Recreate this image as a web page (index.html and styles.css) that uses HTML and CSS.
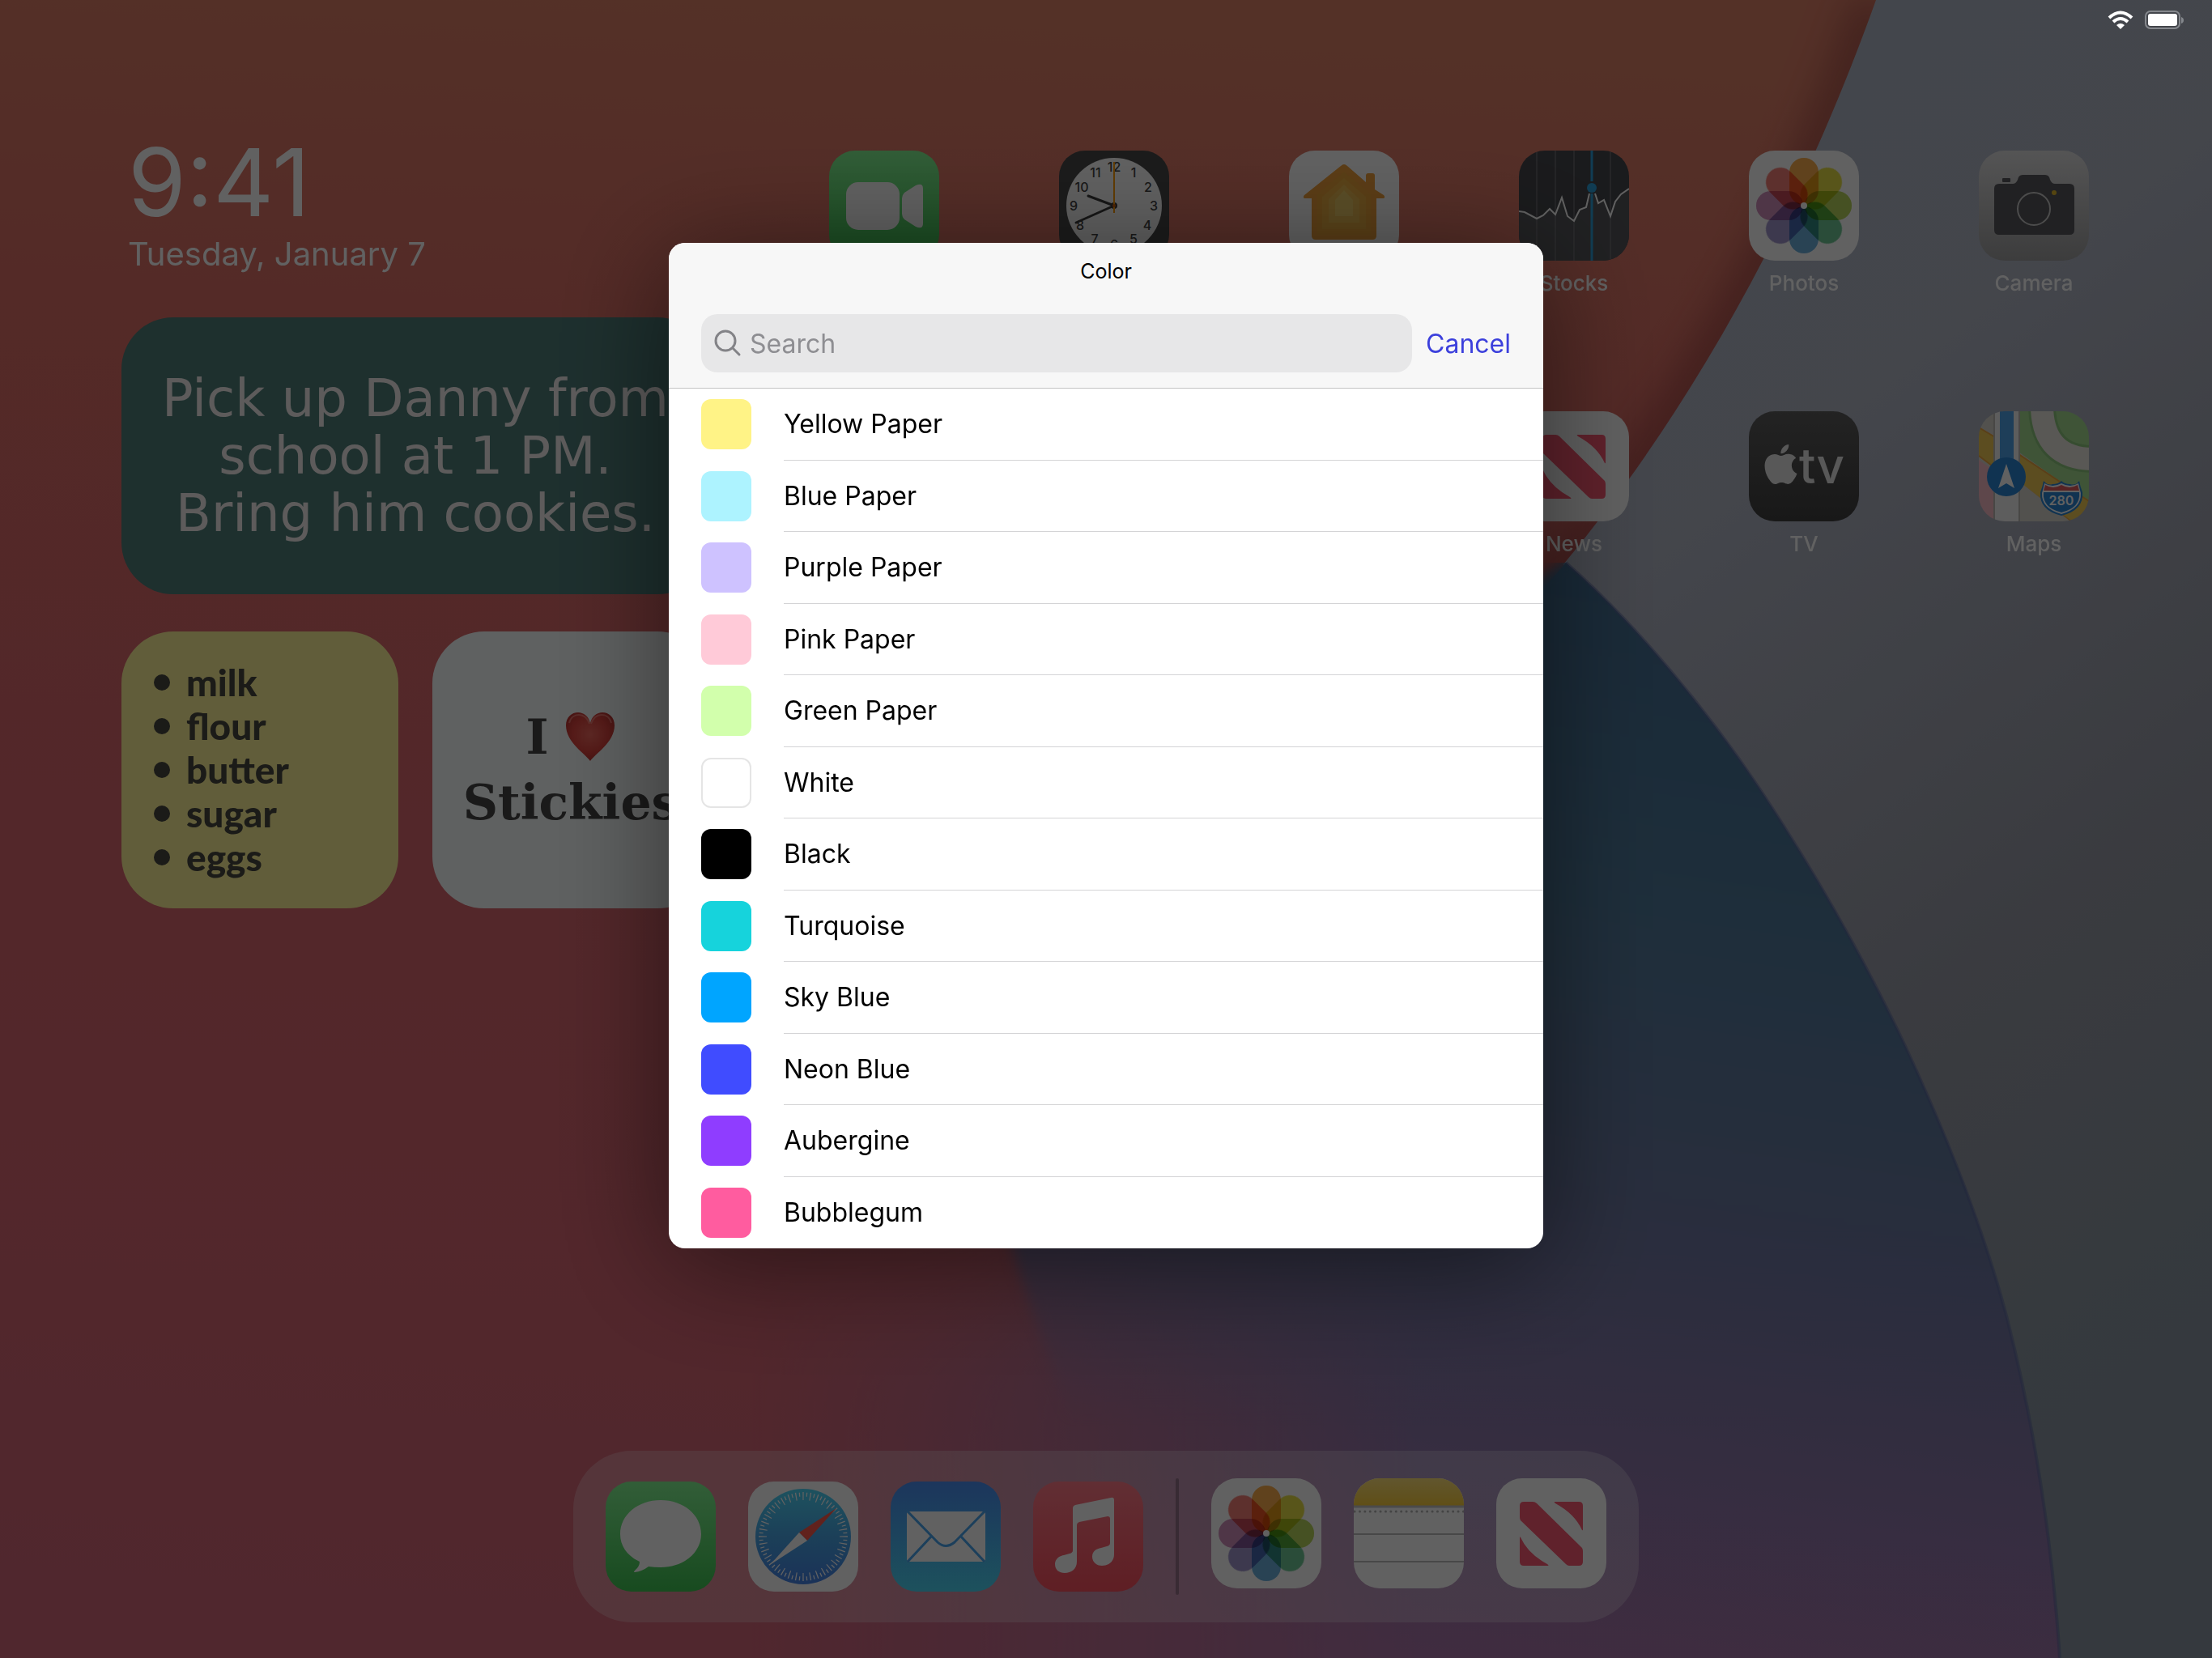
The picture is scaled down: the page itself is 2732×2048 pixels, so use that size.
FILE: index.html
```html
<!DOCTYPE html>
<html lang="en">
<head>
  <meta charset="UTF-8">
  <meta name="viewport" content="width=device-width, initial-scale=1.0">
  <title>Color</title>
  <link rel="stylesheet" href="styles.css">
</head>
<body>
  <!-- wallpaper -->
  <svg class="wallpaper" viewBox="0 0 2732 2048" preserveAspectRatio="none" aria-hidden="true">
    <defs>
      <linearGradient id="wpRed" x1="0.3" y1="0" x2="0.2" y2="1">
        <stop offset="0" stop-color="#de8068"/>
        <stop offset="0.2" stop-color="#dc6f66"/>
        <stop offset="0.45" stop-color="#db686d"/>
        <stop offset="0.75" stop-color="#d96673"/>
        <stop offset="1" stop-color="#d2667a"/>
      </linearGradient>
      <linearGradient id="wpGrey" x1="0" y1="0" x2="0.3" y2="1">
        <stop offset="0" stop-color="#b0bac9"/>
        <stop offset="0.35" stop-color="#b2b7c6"/>
        <stop offset="0.7" stop-color="#999ca8"/>
        <stop offset="1" stop-color="#8b97a2"/>
      </linearGradient>
      <linearGradient id="wpBlue" gradientUnits="userSpaceOnUse" x1="1900" y1="690" x2="1700" y2="2048">
        <stop offset="0" stop-color="#426d92"/>
        <stop offset="0.3" stop-color="#507a9b"/>
        <stop offset="0.6" stop-color="#7078a2"/>
        <stop offset="0.82" stop-color="#9076aa"/>
        <stop offset="1" stop-color="#aa75a8"/>
      </linearGradient>
      <linearGradient id="wpFade" x1="0" y1="0" x2="0" y2="1">
        <stop offset="0.74" stop-color="#fff"/>
        <stop offset="0.86" stop-color="#000"/>
      </linearGradient>
      <linearGradient id="wpSide" x1="0" y1="0" x2="1" y2="0">
        <stop offset="0.34" stop-color="#000"/>
        <stop offset="0.47" stop-color="#777"/>
        <stop offset="0.64" stop-color="#fff"/>
      </linearGradient>
      <filter id="soft" x="-20%" y="-20%" width="140%" height="140%"><feGaussianBlur stdDeviation="24"/></filter>
      <filter id="slightSoft"><feGaussianBlur stdDeviation="8"/></filter>
      <filter id="verySoft" x="-30%" y="-30%" width="160%" height="160%"><feGaussianBlur stdDeviation="70"/></filter>
      <mask id="fadeDown"><rect width="2732" height="2048" fill="url(#wpFade)"/></mask>
      <mask id="fadeSide">
        <rect width="2732" height="2048" fill="url(#wpSide)"/>
        <path d="M0 690H1400V1500L1230 1620H0Z" fill="#000" filter="url(#verySoft)"/>
      </mask>
      <clipPath id="hump"><path d="M1934 695C2020 770 2110 880 2173 974C2240 1075 2300 1180 2353 1292C2410 1415 2450 1520 2478 1625C2515 1770 2535 1910 2544 2048H0V695Z"/></clipPath>
    </defs>
    <rect width="2732" height="2048" fill="url(#wpRed)"/>
    <path d="M2317 0C2240 230 2110 500 1850 800" fill="none" stroke="#7a2f33" stroke-width="50" opacity="0.5" filter="url(#soft)"/>
    <path d="M2317 0C2235 230 2110 480 1931 697L2400 2048H2732V0Z" fill="url(#wpGrey)"/>
    <g clip-path="url(#hump)">
      <g mask="url(#fadeSide)">
        <path d="M1934 695C1800 860 1500 1000 1250 1500L0 1400V2048H2732V695Z" fill="url(#wpBlue)"/>
      </g>
      <g mask="url(#fadeDown)">
        <path d="M1935 690C1500 1000 1200 1300 1250 1540C1270 1620 1330 1740 1400 2048H2780V600Z" fill="url(#wpBlue)" filter="url(#slightSoft)"/>
      </g>
    </g>
    <path d="M1934 695C2020 770 2110 880 2173 974C2240 1075 2300 1180 2353 1292C2410 1415 2450 1520 2478 1625C2515 1770 2535 1910 2544 2048" fill="none" stroke="#5a66a0" stroke-width="4" opacity="0.5"/>
  </svg>

  <!-- shared icons -->
  <svg class="defs" aria-hidden="true">
    <defs>
      <linearGradient id="greenFill" x1="0" y1="0" x2="0" y2="1"><stop offset="0" stop-color="#84f593"/><stop offset="1" stop-color="#3fc453"/></linearGradient>
      <linearGradient id="redFill" x1="0" y1="0" x2="0" y2="1"><stop offset="0" stop-color="#ff7a88"/><stop offset="1" stop-color="#f9505f"/></linearGradient>
      <symbol id="photos" viewBox="0 0 136 136">
        <g class="petals">
          <rect x="50" y="9" width="36" height="58" rx="18" fill="#fbae4c"/>
          <rect x="50" y="9" width="36" height="58" rx="18" fill="#e6df45" transform="rotate(45 68 68)"/>
          <rect x="50" y="9" width="36" height="58" rx="18" fill="#b9d45d" transform="rotate(90 68 68)"/>
          <rect x="50" y="9" width="36" height="58" rx="18" fill="#70c795" transform="rotate(135 68 68)"/>
          <rect x="50" y="9" width="36" height="58" rx="18" fill="#6cb0de" transform="rotate(180 68 68)"/>
          <rect x="50" y="9" width="36" height="58" rx="18" fill="#a095cc" transform="rotate(225 68 68)"/>
          <rect x="50" y="9" width="36" height="58" rx="18" fill="#cf8fbb" transform="rotate(270 68 68)"/>
          <rect x="50" y="9" width="36" height="58" rx="18" fill="#f47e76" transform="rotate(315 68 68)"/>
        </g>
        <circle cx="68" cy="68" r="4" fill="#fff"/>
      </symbol>
      <symbol id="news" viewBox="0 0 136 136">
        <g fill="#fb5973">
          <path d="M29 34Q29 29 34 29H45Q48 29 50 31L106 86Q107 88 107 90V103Q107 108 102 108H90Q88 108 86 106L30 52Q29 50 29 48Z"/>
          <path d="M72 29H102Q107 29 107 34V63Q107 65 106 64Q97 44 73 31Q71 29 72 29Z"/>
          <path d="M29 74Q29 71 30 73Q39 93 63 106Q66 108 63 108H34Q29 108 29 103Z"/>
        </g>
      </symbol>
    </defs>
  </svg>

  <div class="screen">
    <main class="home">
      <section class="widgets">
        <div class="clock">
          <time class="clock-time">9:41</time>
          <span class="clock-date">Tuesday, January 7</span>
        </div>
        <div class="widget chalk">Pick up Danny from<br>school at 1 PM.<br>Bring him cookies.</div>
        <div class="widget yellow">
          <ul>
            <li>milk</li>
            <li>flour</li>
            <li>butter</li>
            <li>sugar</li>
            <li>eggs</li>
          </ul>
        </div>
        <div class="widget white">
          <p>I
            <svg class="heart" viewBox="0 0 62 62" role="img" aria-label="love">
              <defs><radialGradient id="heartFill" cx="0.5" cy="0.45" r="0.6"><stop offset="0" stop-color="#f56a5f"/><stop offset="0.6" stop-color="#e04640"/><stop offset="1" stop-color="#b8322f"/></radialGradient></defs>
              <path d="M31 61C25 52 1 38 1 17C1 7 8 1 16 1C23 1 29 6 31 14C33 6 39 1 46 1C54 1 61 7 61 17C61 38 37 52 31 61Z" fill="url(#heartFill)"/>
              <path d="M5 14C7 6 13 4 17 4C22 4 27 7 30 15M32 15C35 7 40 4 45 4C49 4 55 6 57 14" fill="none" stroke="#ff9a90" stroke-width="2" opacity="0.6"/>
            </svg>
          </p>
          <p>Stickies</p>
        </div>
      </section>

      <section class="apps">
        <a class="app" href="#facetime" aria-label="FaceTime">
          <svg class="icon" viewBox="0 0 136 136">
            <rect width="136" height="136" fill="url(#greenFill)"/>
            <rect x="21" y="39" width="66" height="59" rx="15" fill="#fff"/>
            <path d="M90 59Q90 55 93 52L107 43Q116 39 116 47V90Q116 98 107 94L93 85Q90 82 90 78Z" fill="#fff"/>
          </svg>
        </a>
        <a class="app" href="#clock" aria-label="Clock">
          <svg class="icon" viewBox="0 0 136 136">
            <rect width="136" height="136" fill="#494949"/>
            <circle cx="68" cy="68" r="59" fill="#fff"/>
            <g class="digits">
              <text x="68" y="26">12</text><text x="92" y="33">1</text><text x="110" y="51">2</text><text x="117" y="74">3</text>
              <text x="109" y="98">4</text><text x="92" y="115">5</text><text x="68" y="122">6</text><text x="44" y="115">7</text>
              <text x="26" y="98">8</text><text x="18" y="74">9</text><text x="28" y="51">10</text><text x="45" y="33">11</text>
            </g>
            <path d="M68 68L36 56M68 68L21 89" stroke="#3c3c3c" stroke-width="3" stroke-linecap="round"/>
            <circle cx="68" cy="68" r="4" fill="#3c3c3c"/>
            <path d="M68 14V77" stroke="#ff9d0a" stroke-width="2"/>
            <circle cx="68" cy="68" r="2" fill="#d4600a"/>
          </svg>
        </a>
        <a class="app" href="#home" aria-label="Home">
          <svg class="icon" viewBox="0 0 136 136">
            <rect width="136" height="136" fill="#fff"/>
            <path d="M64 19Q68 15 72 19L95 39V31Q95 28 98 28H103Q106 28 106 31V48L117 55Q120 59 115 59H108V105Q108 110 103 110H33Q28 110 28 105V59H21Q16 59 19 55Z" fill="#f0a03c"/>
            <path d="M68 26L101 54V104H35V54Z" fill="#eda53a"/>
            <path d="M68 34L95 57V97H41V57Z" fill="#edb043"/>
            <path d="M68 42L87 60V89H49V60Z" fill="#eebd53"/>
            <path d="M68 49L79 61V81H57V61Z" fill="#efcd68"/>
          </svg>
        </a>
        <a class="app" href="#stocks">
          <svg class="icon" viewBox="0 0 136 136">
            <rect width="136" height="136" fill="#46474c"/>
            <path d="M0 75L7 76L22 84L30 80L38 72L45 79L53 58L60 81L68 87L75 73L83 70L87 53H94L98 65L105 61L113 81L119 63L126 54L136 47V136H0Z" fill="#56575b"/>
            <path d="M22 0V136M45 0V136M68 0V136M113 0V136" stroke="#7c7c80"/>
            <path d="M90 0V38M90 53V136" stroke="#2c9fda" stroke-width="3"/>
            <path d="M0 75L7 76L22 84L30 80L38 72L45 79L53 58L60 81L68 87L75 73L83 70L87 53M94 53L98 65L105 61L113 81L119 63L126 54L136 47" fill="none" stroke="#fff" stroke-width="2"/>
            <circle cx="90" cy="46" r="6" fill="#2c9fda"/>
          </svg>
          <span>Stocks</span>
        </a>
        <a class="app" href="#photos">
          <svg class="icon white-icon" viewBox="0 0 136 136"><use href="#photos"/></svg>
          <span>Photos</span>
        </a>
        <a class="app" href="#camera">
          <svg class="icon" viewBox="0 0 136 136">
            <defs><linearGradient id="camFill" x1="0" y1="0" x2="0" y2="1"><stop offset="0" stop-color="#dededf"/><stop offset="1" stop-color="#9f9fa0"/></linearGradient></defs>
            <rect width="136" height="136" fill="url(#camFill)"/>
            <path d="M25 41H42Q46 41 48 36Q49 30 54 30H82Q87 30 88 36Q90 41 94 41H112Q118 41 118 47V98Q118 104 112 104H25Q19 104 19 98V47Q19 41 25 41Z" fill="#58585c"/>
            <rect x="29" y="34" width="10" height="5" rx="1" fill="#58585c"/>
            <circle cx="68" cy="72" r="20" fill="none" stroke="#c8c8c9" stroke-width="2"/>
            <circle cx="93" cy="52" r="3" fill="#dfb62c"/>
          </svg>
          <span>Camera</span>
        </a>
        <a class="app news" href="#news">
          <svg class="icon white-icon" viewBox="0 0 136 136"><use href="#news"/></svg>
          <span>News</span>
        </a>
        <a class="app" href="#tv">
          <svg class="icon" viewBox="0 0 136 136">
            <defs><linearGradient id="tvFill" x1="0" y1="0" x2="0" y2="1"><stop offset="0" stop-color="#5c5c5c"/><stop offset="1" stop-color="#404040"/></linearGradient></defs>
            <rect width="136" height="136" fill="url(#tvFill)"/>
            <path transform="translate(15 41) scale(2.04)" fill="#e6e6e6" d="M12.152 6.896c-.948 0-2.415-1.078-3.96-1.04-2.04.027-3.91 1.183-4.961 3.014-2.117 3.675-.546 9.103 1.519 12.09 1.013 1.454 2.208 3.09 3.792 3.039 1.52-.065 2.09-.987 3.935-.987 1.831 0 2.35.987 3.96.948 1.637-.026 2.676-1.48 3.676-2.948 1.156-1.688 1.636-3.325 1.662-3.415-.039-.013-3.182-1.221-3.22-4.857-.026-3.04 2.48-4.494 2.597-4.559-1.429-2.09-3.623-2.324-4.39-2.376-2-.156-3.675 1.09-4.61 1.09zM15.53 3.83c.843-1.012 1.4-2.427 1.245-3.83-1.207.052-2.662.805-3.532 1.818-.78.896-1.454 2.338-1.273 3.714 1.338.104 2.715-.688 3.559-1.701"/>
            <text class="tv-text" x="90" y="89">tv</text>
          </svg>
          <span>TV</span>
        </a>
        <a class="app" href="#maps">
          <svg class="icon" viewBox="0 0 136 136">
            <rect width="136" height="136" fill="#d8d6cc"/>
            <path d="M49 0H136V112L49 50Z" fill="#a5de92"/>
            <path d="M78 -4Q80 58 140 59" fill="none" stroke="#8fc97f" stroke-width="34"/>
            <path d="M78 -4Q80 58 140 59" fill="none" stroke="#ebe6df" stroke-width="28"/>
            <path d="M0 19L136 110V136H114L0 55Z" fill="#f2cb55"/>
            <path d="M0 20L20 32M0 55L20 70M49 53L136 111M52 90L114 136" stroke="#eda73f" stroke-width="2"/>
            <path d="M0 60L20 74V136H0Z" fill="#f7bcc4"/>
            <path d="M49 86L113 136H49Z" fill="#d8d6cc"/>
            <rect x="20" width="29" height="136" fill="#f4f4f4"/>
            <path d="M19 0V136M50 0V136" stroke="#bdbcb5" stroke-width="2"/>
            <rect x="26" width="17" height="70" fill="#4fa3ea"/>
            <circle cx="34" cy="81" r="24" fill="#2b86d6"/>
            <path d="M34 65L44 95L34 89L24 95Z" fill="#fff"/>
            <path d="M80 86Q85 92 91 90Q98 90 102 86Q106 90 113 90Q120 92 124 86Q125 92 128 100Q130 122 102 129Q74 122 76 100Q79 92 80 86Z" fill="#2b86d6"/>
            <path d="M81 89Q91 95 102 89Q113 95 123 89Q124 94 126 101Q127 120 102 127Q77 120 78 101Q80 94 81 89Z" fill="#fff"/>
            <path d="M82 91Q92 97 102 91Q112 97 122 91L124 98H80Z" fill="#e25d5d"/>
            <path d="M80 100H124Q126 119 102 125Q78 119 80 100Z" fill="#2b86d6"/>
            <text class="shield-text" x="102" y="116">280</text>
          </svg>
          <span>Maps</span>
        </a>
      </section>
    </main>

    <nav class="dock" aria-label="Dock">
      <div class="dock-group">
        <a href="#messages" aria-label="Messages">
          <svg class="icon" viewBox="0 0 136 136">
            <rect width="136" height="136" fill="url(#greenFill)"/>
            <path d="M68 23C96 23 118 41 118 65C118 88 96 106 68 106Q60 106 53 105Q45 111 36 112Q34 112 36 110Q42 105 42 99C27 92 18 80 18 65C18 41 40 23 68 23Z" fill="#fff"/>
          </svg>
        </a>
        <a href="#safari" aria-label="Safari">
          <svg class="icon" viewBox="0 0 136 136">
            <defs><linearGradient id="safariFill" x1="0" y1="0" x2="0" y2="1"><stop offset="0" stop-color="#4ed7f8"/><stop offset="0.5" stop-color="#4aa7e8"/><stop offset="1" stop-color="#4683e8"/></linearGradient></defs>
            <rect width="136" height="136" fill="#fff"/>
            <circle cx="68" cy="68" r="59" fill="url(#safariFill)"/>
            <circle cx="68" cy="68" r="50" fill="none" stroke="#fff" stroke-width="10" pathLength="360" stroke-dasharray="1.4 8.6" stroke-dashoffset="0.7"/>
            <circle cx="68" cy="68" r="52" fill="none" stroke="#fff" stroke-width="5" pathLength="360" stroke-dasharray="1.4 8.6" stroke-dashoffset="-4.3"/>
            <path d="M109 33L63 63L73 73Z" fill="#ff5a4d"/>
            <path d="M27 103L63 63L73 73Z" fill="#fff"/>
          </svg>
        </a>
        <a href="#mail" aria-label="Mail">
          <svg class="icon" viewBox="0 0 136 136">
            <defs><linearGradient id="mailFill" x1="0" y1="0" x2="0" y2="1"><stop offset="0" stop-color="#4a8df2"/><stop offset="1" stop-color="#4cd6f3"/></linearGradient></defs>
            <rect width="136" height="136" fill="url(#mailFill)"/>
            <rect x="20" y="37" width="97" height="62" rx="3" fill="#fff"/>
            <path d="M21 37L58 75Q68 84 79 75L116 37M21 99L50 68M116 99L87 68" fill="none" stroke="#4ba7ef" stroke-width="3"/>
          </svg>
        </a>
        <a href="#music" aria-label="Music">
          <svg class="icon" viewBox="0 0 136 136">
            <rect width="136" height="136" fill="url(#redFill)"/>
            <path d="M49 33Q49 30 52 29L96 20Q100 19 100 23V90C100 99 93 104 85 104C78 104 73 99 73 93C73 86 78 83 84 82L91 80Q95 79 95 76V46Q95 43 92 43L57 50Q54 51 54 54V99C54 108 47 113 39 113C32 113 27 109 27 102C27 96 32 92 38 91L45 89Q49 88 49 85Z" fill="#fff"/>
          </svg>
        </a>
      </div>
      <span class="dock-divider"></span>
      <div class="dock-group recent">
        <a href="#photos" aria-label="Photos"><svg class="icon white-icon" viewBox="0 0 136 136"><use href="#photos"/></svg></a>
        <a href="#notes" aria-label="Notes">
          <svg class="icon" viewBox="0 0 136 136">
            <defs><linearGradient id="notesFill" x1="0" y1="0" x2="0" y2="1"><stop offset="0" stop-color="#ffe27a"/><stop offset="1" stop-color="#fbce3c"/></linearGradient></defs>
            <rect width="136" height="136" fill="#fff"/>
            <rect width="136" height="34" fill="url(#notesFill)"/>
            <path d="M0 35H136" stroke="#c4c4c4" stroke-width="3"/>
            <path d="M1 41H136" stroke="#b4b4b4" stroke-width="3" stroke-linecap="round" stroke-dasharray="0.1 6.3"/>
            <path d="M0 69H136M0 103H136" stroke="#bdbdbd" stroke-width="2"/>
          </svg>
        </a>
        <a href="#news" aria-label="News"><svg class="icon white-icon" viewBox="0 0 136 136"><use href="#news"/></svg></a>
      </div>
    </nav>
  </div>

  <div class="overlay">
    <div class="status">
      <svg width="32" height="24" viewBox="0 0 32 24" fill="none" stroke="#fff" stroke-width="4" aria-label="Wi-Fi">
        <path d="M2 9Q16 -4 30 9"/>
        <path d="M7 14Q16 6 25 14"/>
        <path d="M16 23L11 18Q16 14 21 18Z" fill="#fff" stroke="none"/>
      </svg>
      <svg width="48" height="24" viewBox="0 0 48 24" aria-label="Battery">
        <rect x="1" y="1" width="42" height="21" rx="6" fill="none" stroke="#85888d" stroke-width="2"/>
        <rect x="4" y="4" width="36" height="15" rx="3" fill="#fff"/>
        <path d="M45 8Q48 9 48 12Q48 15 45 16Z" fill="#85888d"/>
      </svg>
    </div>

    <div class="sheet" role="dialog" aria-labelledby="sheet-title">
      <header class="sheet-header">
        <h1 id="sheet-title">Color</h1>
        <div class="search-row">
          <label class="search">
            <svg width="34" height="34" viewBox="0 0 34 34" fill="none" stroke="#838387" stroke-width="3" stroke-linecap="round" aria-hidden="true">
              <circle cx="14" cy="14" r="12"/>
              <path d="M23 23L31 31"/>
            </svg>
            <input type="search" placeholder="Search" aria-label="Search">
          </label>
          <button class="cancel" type="button">Cancel</button>
        </div>
      </header>
      <ul class="colors">
        <li><button type="button"><span class="swatch yellow-paper"></span><span class="name">Yellow Paper</span></button></li>
        <li><button type="button"><span class="swatch blue-paper"></span><span class="name">Blue Paper</span></button></li>
        <li><button type="button"><span class="swatch purple-paper"></span><span class="name">Purple Paper</span></button></li>
        <li><button type="button"><span class="swatch pink-paper"></span><span class="name">Pink Paper</span></button></li>
        <li><button type="button"><span class="swatch green-paper"></span><span class="name">Green Paper</span></button></li>
        <li><button type="button"><span class="swatch plain-white"></span><span class="name">White</span></button></li>
        <li><button type="button"><span class="swatch black"></span><span class="name">Black</span></button></li>
        <li><button type="button"><span class="swatch turquoise"></span><span class="name">Turquoise</span></button></li>
        <li><button type="button"><span class="swatch sky-blue"></span><span class="name">Sky Blue</span></button></li>
        <li><button type="button"><span class="swatch neon-blue"></span><span class="name">Neon Blue</span></button></li>
        <li><button type="button"><span class="swatch aubergine"></span><span class="name">Aubergine</span></button></li>
        <li><button type="button"><span class="swatch bubblegum"></span><span class="name">Bubblegum</span></button></li>
      </ul>
    </div>
  </div>
</body>
</html>
```

FILE: styles.css
```css
* {
  box-sizing: border-box;
}
body {
  margin: 0;
  font-family: Inter, "Liberation Sans", sans-serif;
  background: #52262c;
}
h1, p, ul {
  margin: 0;
  padding: 0;
}
ul {
  list-style: none;
}
a {
  color: inherit;
  text-decoration: none;
}
button, input {
  font: inherit;
  border: none;
  background: none;
  padding: 0;
}
.wallpaper {
  position: fixed;
  inset: 0;
  width: 100%;
  height: 100%;
}
.defs {
  position: absolute;
  width: 0;
  height: 0;
}

/* home screen */
.screen {
  position: relative;
  min-height: 100vh;
  display: flex;
  flex-direction: column;
  align-items: center;
  padding-bottom: 44px;
}
.home {
  flex: 1;
  align-self: stretch;
  display: flex;
  justify-content: space-between;
  align-items: flex-start;
  padding: 166px 152px 0 150px;
}
.widgets {
  display: grid;
  grid-template-columns: 342px 342px;
  grid-auto-rows: 342px;
  grid-template-rows: 180px;
  gap: 46px 42px;
}
.clock {
  grid-column: span 2;
  display: flex;
  flex-direction: column;
  gap: 6px;
  padding-left: 8px;
  color: #fff;
}
.clock-time {
  font-size: 116px;
  line-height: 118px;
  font-weight: 400;
}
.clock-date {
  font-size: 40px;
  line-height: 48px;
  font-weight: 400;
}
.widget {
  border-radius: 64px;
  display: flex;
  flex-direction: column;
  justify-content: center;
}
.chalk {
  grid-column: span 2;
  background: #4f7e7a;
  color: #f4f0f0;
  text-align: center;
  font-family: Chalkduster, "DejaVu Sans", sans-serif;
  font-size: 64px;
  line-height: 71px;
}
.yellow {
  background: #fff39a;
  color: #474740;
  font-family: "Marker Felt", Lato, sans-serif;
  font-weight: 900;
  font-size: 46px;
  line-height: 54px;
  padding-left: 40px;
}
.yellow li {
  display: flex;
  align-items: center;
  gap: 20px;
}
.yellow li::before {
  content: "";
  width: 20px;
  height: 20px;
  border-radius: 50%;
  background: #474740;
}
.white {
  background: #faffff;
  color: #444;
  text-align: center;
  font-family: "American Typewriter", "DejaVu Serif", serif;
  font-weight: bold;
  font-size: 60px;
  line-height: 81px;
}
.heart {
  width: 62px;
  height: 62px;
  vertical-align: -10px;
}
.apps {
  display: grid;
  grid-template-columns: repeat(6, 136px);
  gap: 143px 148px;
  padding-top: 20px;
}
.app {
  display: flex;
  flex-direction: column;
  align-items: center;
  gap: 13px;
  color: #fff;
  font-size: 26px;
  line-height: 30px;
  font-weight: 500;
}
.news {
  grid-column: 4;
}
.icon {
  display: block;
  width: 136px;
  height: 136px;
  border-radius: 32px;
  overflow: hidden;
}
.white-icon {
  background: #fff;
}
.petals rect {
  mix-blend-mode: multiply;
}
.digits {
  font-size: 16px;
  font-weight: 500;
  fill: #444;
  text-anchor: middle;
}
.tv-text {
  font-size: 60px;
  font-weight: 500;
  fill: #e6e6e6;
  text-anchor: middle;
}
.shield-text {
  font-size: 16px;
  font-weight: 600;
  fill: #fff;
  text-anchor: middle;
}
.dock {
  display: flex;
  align-items: center;
  gap: 40px;
  height: 212px;
  padding: 0 40px;
  border-radius: 72px;
  background: rgba(255, 255, 255, 0.25);
}
.dock-group {
  display: flex;
  gap: 40px;
}
.recent {
  padding-bottom: 8px;
}
.dock-divider {
  width: 4px;
  height: 144px;
  border-radius: 2px;
  background: rgba(60, 50, 60, 0.35);
}

/* dimmed layer with the color sheet */
.overlay {
  position: fixed;
  inset: 0;
  display: flex;
  flex-direction: column;
  align-items: center;
  background: rgba(0, 0, 0, 0.62);
}
.status {
  align-self: stretch;
  display: flex;
  justify-content: flex-end;
  gap: 14px;
  height: 300px;
  padding: 13px 35px 0;
}
.sheet {
  width: 1080px;
  max-width: 100%;
  min-height: 1242px;
  display: flex;
  flex-direction: column;
  border-radius: 20px;
  overflow: hidden;
  background: #fff;
  box-shadow: 0 20px 140px rgba(0, 0, 0, 0.5);
}
.sheet-header {
  padding: 20px 40px 19px;
  background: #f7f7f7;
  border-bottom: 1px solid #c4c4c4;
}
.sheet-header h1 {
  font-size: 25px;
  line-height: 30px;
  font-weight: 400;
  text-align: center;
}
.search-row {
  display: flex;
  align-items: center;
  gap: 17px;
  margin-top: 38px;
  font-size: 32px;
}
.search {
  flex: 1;
  display: flex;
  align-items: center;
  gap: 10px;
  height: 72px;
  padding: 0 16px;
  border-radius: 20px;
  background: #e7e7e8;
}
.search input {
  flex: 1;
  outline: none;
}
.search input::placeholder {
  color: #8e8e92;
  opacity: 1;
}
.cancel {
  color: #3c40dc;
}
.colors {
  flex: 1;
  display: grid;
  grid-auto-rows: 1fr;
}
.colors li {
  display: flex;
}
.colors button {
  flex: 1;
  display: flex;
  align-items: center;
  gap: 40px;
  padding-left: 40px;
  text-align: left;
  font-size: 32px;
  color: #000;
}
.name {
  flex: 1;
  align-self: stretch;
  display: flex;
  align-items: center;
  border-bottom: 1px solid #d4d4d6;
}
.colors li:last-child .name {
  border-bottom: none;
}
.swatch {
  width: 62px;
  height: 62px;
  border-radius: 12px;
}
.yellow-paper { background: #fff386; }
.blue-paper { background: #adf3ff; }
.purple-paper { background: #cec2ff; }
.pink-paper { background: #ffcad8; }
.green-paper { background: #d2ffac; }
.plain-white {
  background: #fff;
  border: 2px solid #e5e5e5;
}
.black { background: #000; }
.turquoise { background: #16d3dc; }
.sky-blue { background: #00a5ff; }
.neon-blue { background: #404cff; }
.aubergine { background: #8f3dff; }
.bubblegum { background: #ff5c9f; }
```
